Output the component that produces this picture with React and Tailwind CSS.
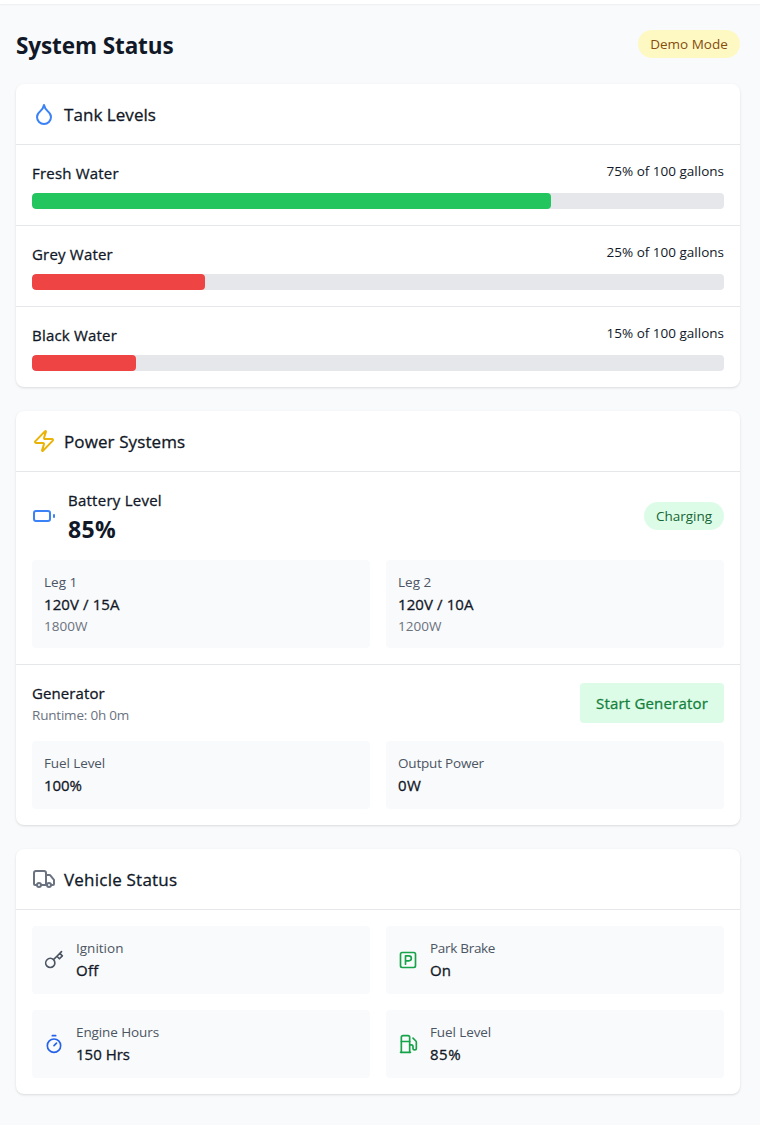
import React from "react";
import { Droplet, Zap, Truck } from "lucide-react";

const tanks = [
  { name: "Fresh Water", level: 75, color: "bg-[#22c55e]" },
  { name: "Grey Water", level: 25, color: "bg-[#ef4444]" },
  { name: "Black Water", level: 15, color: "bg-[#ef4444]" },
];

const medium = "text-[15px] leading-6 font-medium [-webkit-text-stroke:0.3px_currentColor]";
const small = "text-[13.5px] leading-5";

function Card({ icon, title, tracking, children }) {
  return (
    <section className="rounded-lg bg-white shadow-[0_1px_3px_0_rgb(0_0_0/0.1),0_1px_2px_-1px_rgb(0_0_0/0.1)]">
      <div className="flex items-center gap-2 border-b border-[#e5e7eb] p-4">
        {icon}
        <h2 className={`translate-y-px text-[17px] leading-7 font-medium [-webkit-text-stroke:0.3px_currentColor] ${tracking}`}>{title}</h2>
      </div>
      {children}
    </section>
  );
}

function Stat({ icon, label, value, note, labelTracking = "", valueTracking = "" }) {
  return (
    <div className="flex items-center gap-3 rounded bg-[#f9fafb] p-3">
      {icon}
      <div>
        <div className={`${small} text-[#4b5563] ${labelTracking}`}>{label}</div>
        <div className={`${medium} ${valueTracking}`}>{value}</div>
        {note && <div className={`${small} text-[#6b7280]`}>{note}</div>}
      </div>
    </div>
  );
}

function Icon({ className, children }) {
  return (
    <svg
      className={className}
      viewBox="0 0 24 24"
      fill="none"
      stroke="currentColor"
      strokeWidth="2"
      strokeLinecap="round"
      strokeLinejoin="round"
    >
      {children}
    </svg>
  );
}

const BatteryIcon = () => (
  <Icon className="size-6 text-[#3b82f6]">
    <rect width="16" height="10" x="2" y="7" rx="2" ry="2" />
    <line x1="22" x2="22" y1="11" y2="13" />
  </Icon>
);

const KeyIcon = () => (
  <Icon className="size-5 text-[#4b5563]">
    <path d="M21 2l-2 2m-7.61 7.61a5.5 5.5 0 1 1-7.778 7.778 5.5 5.5 0 0 1 7.777-7.777zm0 0L15.5 7.5m0 0l3 3L22 7l-3-3m-3.5 3.5L19 4" />
  </Icon>
);

const ParkingIcon = () => (
  <Icon className="size-5 text-[#16a34a]">
    <rect width="18" height="18" x="3" y="3" rx="2" />
    <path d="M9 17V7h4a3 3 0 0 1 0 6H9" />
  </Icon>
);

const TimerIcon = () => (
  <Icon className="size-5 text-[#2563eb]">
    <line x1="10" x2="14" y1="2" y2="2" />
    <line x1="12" x2="15" y1="14" y2="11" />
    <circle cx="12" cy="14" r="8" />
  </Icon>
);

const FuelIcon = () => (
  <Icon className="size-5 text-[#16a34a]">
    <line x1="3" x2="15" y1="22" y2="22" />
    <line x1="4" x2="14" y1="9" y2="9" />
    <path d="M14 22V4a2 2 0 0 0-2-2H6a2 2 0 0 0-2 2v18" />
    <path d="M14 13h2a2 2 0 0 1 2 2v2a2 2 0 0 0 2 2a2 2 0 0 0 2-2V9.83a2 2 0 0 0-.59-1.42L18 5" />
  </Icon>
);

export default function App() {
  return (
    <div className="min-h-[1125px] bg-[#f9fafb] font-['Open_Sans','Noto_Sans',sans-serif] text-[#111827]">
      <header className="h-1 bg-white shadow-[0_1px_2px_0_rgb(0_0_0/0.05)]" />
      <main className="flex flex-col gap-6 py-6 pr-5 pl-4">
        <div className="flex items-center justify-between">
          <h1 className="translate-y-0.5 text-[22.5px] leading-8 font-bold tracking-[-0.1px]">System Status</h1>
          <span className={`w-[102px] rounded-full bg-[#fef9c3] py-1 text-center text-[#854d0e] ${small}`}>Demo Mode</span>
        </div>

        <Card title="Tank Levels" tracking="tracking-[0.05px]" icon={<Droplet className="size-6 text-[#3b82f6]" />}>
          <div className="divide-y divide-[#e5e7eb]">
            {tanks.map((t) => (
              <div key={t.name} className="p-4">
                <div className="mb-2 flex justify-between">
                  <span className={`${medium} tracking-[0.2px]`}>{t.name}</span>
                  <span className={small}>{t.level}% of 100 gallons</span>
                </div>
                <div className="h-4 overflow-hidden rounded bg-[#e5e7eb]">
                  <div className={`h-4 rounded ${t.color}`} style={{ width: `${t.level}%` }} />
                </div>
              </div>
            ))}
          </div>
        </Card>

        <Card title="Power Systems" tracking="tracking-[0.1px]" icon={<Zap className="size-6 text-[#eab308]" />}>
          <div className="border-b border-[#e5e7eb] p-4">
            <div className="mb-4 flex items-center justify-between">
              <div className="flex items-center gap-3">
                <BatteryIcon />
                <div>
                  <div className={`${medium} tracking-[0.25px]`}>Battery Level</div>
                  <div className="translate-y-px text-[23px] leading-8 font-bold tracking-[0.35px]">85%</div>
                </div>
              </div>
              <span className={`w-20 rounded-full bg-[#dcfce7] py-1 text-center text-[#166534] ${small}`}>Charging</span>
            </div>
            <div className="grid grid-cols-2 gap-4">
              <Stat label="Leg 1" value="120V / 15A" note="1800W" valueTracking="tracking-[0.1px]" />
              <Stat label="Leg 2" value="120V / 10A" note="1200W" valueTracking="tracking-[0.1px]" />
            </div>
          </div>
          <div className="p-4">
            <div className="mb-4 flex items-center justify-between">
              <div>
                <div className={`${medium} tracking-[0.1px]`}>Generator</div>
                <div className={`${small} tracking-[-0.2px] text-[#6b7280]`}>Runtime: 0h 0m</div>
              </div>
              <button className={`w-36 rounded bg-[#dcfce7] py-2 text-[#15803d] ${medium} tracking-[0.18px]`}>
                Start Generator
              </button>
            </div>
            <div className="grid grid-cols-2 gap-4">
              <Stat label="Fuel Level" value="100%" labelTracking="tracking-[-0.1px]" valueTracking="tracking-[-0.1px]" />
              <Stat label="Output Power" value="0W" labelTracking="tracking-[-0.2px]" valueTracking="tracking-[0.5px]" />
            </div>
          </div>
        </Card>

        <Card title="Vehicle Status" tracking="tracking-[0.22px]" icon={<Truck className="size-6 text-[#6b7280]" />}>
          <div className="grid grid-cols-2 gap-4 p-4">
            <Stat label="Ignition" value="Off" valueTracking="tracking-[0.3px]" icon={<KeyIcon />} />
            <Stat label="Park Brake" value="On" labelTracking="tracking-[-0.3px]" valueTracking="tracking-[0.2px]" icon={<ParkingIcon />} />
            <Stat label="Engine Hours" value="150 Hrs" labelTracking="tracking-[-0.1px]" icon={<TimerIcon />} />
            <Stat label="Fuel Level" value="85%" labelTracking="tracking-[-0.1px]" valueTracking="tracking-[0.5px]" icon={<FuelIcon />} />
          </div>
        </Card>
      </main>
    </div>
  );
}
